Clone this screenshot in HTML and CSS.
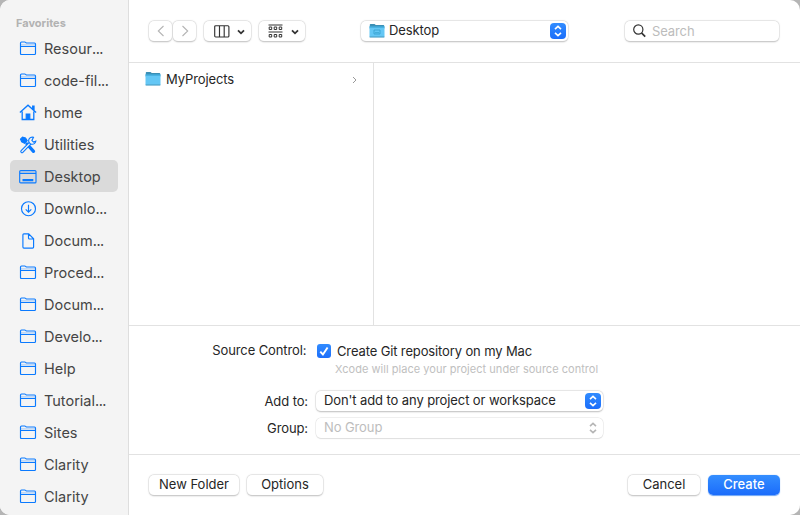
FILE: index.html
```html
<!DOCTYPE html>
<html lang="en">
<head>
<meta charset="utf-8">
<title>Create Project</title>
<link rel="stylesheet" href="styles.css">
</head>
<body>
<svg class="defs" width="0" height="0" aria-hidden="true">
  <defs>
    <symbol id="folder" viewBox="0 0 18 18"><path d="M1.500 13.500V3q0-1 1-1h3.200q.5 0 .9.400l.7.600h8.200q1 0 1 1v9.500q0 1-1 1h-13q-1 0-1-1zM1.500 6.500h15"/><path d="M2 4.900h14" opacity=".3"/></symbol>
    <symbol id="home" viewBox="0 0 18 18"><path d="M.9 8.600 9 1.200l8.100 7.400M3.200 7.500v8h11.600v-8M13.700 5.300V2.200h1.300v4.300" stroke-width="1.300"/><path d="M7.200 15.500V10h3.600v5.500z" fill="#0a7aff"/></symbol>
    <symbol id="tools" viewBox="0 0 18 18"><path d="M1.500 3.200 3.500 1.200l3 .7 1.700 2.800-2.500 2.500-3-1.500z" fill="#0a7aff"/><path d="m8 8 6.500 7.300" stroke-width="3.300" stroke-linecap="round"/><path d="m3 15.500 8.200-8.400" stroke-width="3.500" stroke-linecap="round"/><path d="m3 15.500 8.200-8.400" stroke="#f4f4f4" stroke-width="1.300" stroke-linecap="round"/><path d="M14.500 1.300a3.600 3.600 0 1 0 2.300 3.900l-2.300.9-1.600-1.600z" fill="#f4f4f4"/></symbol>
    <symbol id="desktop" viewBox="0 0 18 18"><rect x=".7" y="2.600" width="16.300" height="12.300" rx="1"/><path d="M1 5.300h16"/><path d="M3.500 12.200h10.800" stroke-width="2.200"/></symbol>
    <symbol id="download" viewBox="0 0 18 18"><circle cx="9.500" cy="8.700" r="7"/><path d="M9.500 4.700v7.200M6.700 9.300l2.800 2.800 2.800-2.800"/></symbol>
    <symbol id="document" viewBox="0 0 18 18"><path d="M3.900 15.100V2.800q0-1 1-1h4.800l4.900 5v8.300q0 1-1 1H4.900q-1 0-1-1zM9.500 2v4q0 1 1 1h4"/></symbol>
    <symbol id="blue-folder" viewBox="0 0 16 16"><path d="M.8 1.700q0-.7.700-.7h4l1.300 1.100h7.700q.7 0 .7.700V6H.8z" fill="#3b8fb5"/><path d="M.5 3.500h15v10q0 .7-.7.700H1.200q-.7 0-.7-.7z" fill="#64c7f5"/><path d="M.5 3.500h15v1H.5z" fill="#2f9dcf"/><path d="M.6 14h14.800" stroke="#4594b8" stroke-width=".9"/></symbol>
    <symbol id="chevrons" viewBox="0 0 16 16"><path d="M5 6.200 8 3.400l3 2.800M5 9.800l3 2.800 3-2.800"/></symbol>
    <symbol id="down" viewBox="0 0 8 6"><path d="m1 1.300 3 3 3-3"/></symbol>
  </defs>
</svg>
<div class="dialog">
  <nav class="sidebar">
    <h2>Favorites</h2>
    <ul>
      <li><svg><use href="#folder"/></svg><span>Resour<i>...</i></span></li>
      <li><svg><use href="#folder"/></svg><span>code-fil<i>...</i></span></li>
      <li><svg><use href="#home"/></svg><span>home</span></li>
      <li><svg><use href="#tools"/></svg><span>Utilities</span></li>
      <li class="selected"><svg><use href="#desktop"/></svg><span>Desktop</span></li>
      <li><svg><use href="#download"/></svg><span>Downlo<i>...</i></span></li>
      <li><svg><use href="#document"/></svg><span>Docum<i>...</i></span></li>
      <li><svg><use href="#folder"/></svg><span>Proced<i>...</i></span></li>
      <li><svg><use href="#folder"/></svg><span>Docum<i>...</i></span></li>
      <li><svg><use href="#folder"/></svg><span>Develo<i>...</i></span></li>
      <li><svg><use href="#folder"/></svg><span>Help</span></li>
      <li><svg><use href="#folder"/></svg><span>Tutorial<i>...</i></span></li>
      <li><svg><use href="#folder"/></svg><span>Sites</span></li>
      <li><svg><use href="#folder"/></svg><span>Clarity</span></li>
      <li><svg><use href="#folder"/></svg><span>Clarity</span></li>
    </ul>
  </nav>
  <main>
    <header class="toolbar">
      <div class="control nav"><svg width="8" height="12" viewBox="0 0 8 12"><path d="M6.500 1 1.300 6l5.200 5"/></svg></div>
      <div class="control nav"><svg width="8" height="12" viewBox="0 0 8 12"><path d="m1.500 1 5.200 5-5.200 5"/></svg></div>
      <div class="control view columns"><svg width="16" height="13" viewBox="0 0 16 13"><rect x=".7" y=".7" width="14.200" height="11.300" rx="1"/><path d="M5.500 1v11M10.200 1v11"/></svg><svg class="down"><use href="#down"/></svg></div>
      <div class="control view groups"><svg width="15" height="15" viewBox="0 0 15 15"><path d="M.5 1h14M.5 8h14M1.200 3h2.500v2.500H1.200zM6.200 3h2.500v2.500H6.200zM11.200 3h2.500v2.500h-2.500zM1.200 10.500h2.500V13H1.200zM6.200 10.500h2.500V13H6.200zM11.200 10.500h2.500V13h-2.500z"/></svg><svg class="down"><use href="#down"/></svg></div>
      <div class="control popup location"><svg class="folder" viewBox="0 0 16 16"><use href="#blue-folder"/><path d="M5 7h6v4H5zM6 9.700h4" fill="none" stroke="#349fcc" stroke-width=".8"/></svg><span>Desktop</span><svg class="stepper"><use href="#chevrons"/></svg></div>
      <div class="control search"><svg width="14" height="14" viewBox="0 0 14 14"><circle cx="5.300" cy="5.500" r="4.600"/><path d="m8.500 8.800 3.700 3.800" stroke-width="1.700"/></svg><span>Search</span></div>
    </header>
    <section class="browser">
      <div class="column"><svg class="folder"><use href="#blue-folder"/></svg><span>MyProjects</span><svg class="more" width="5" height="8" viewBox="0 0 5 8"><path d="m1 1 3 3-3 3"/></svg></div>
    </section>
    <section class="options">
      <div class="row source"><span class="label">Source Control:</span><svg class="check" viewBox="0 0 14 14"><path d="m3.300 7.700 2.600 2.800 4.700-7"/></svg><span class="git">Create Git repository on my Mac</span></div>
      <p>Xcode will place your project under source control</p>
      <div class="row add"><span class="label">Add to:</span><div class="control popup"><span>Don't add to any project or workspace</span><svg class="stepper"><use href="#chevrons"/></svg></div></div>
      <div class="row group"><span class="label">Group:</span><div class="control popup disabled"><span>No Group</span><svg class="stepper"><use href="#chevrons"/></svg></div></div>
    </section>
    <footer>
      <div class="control new-folder">New Folder</div>
      <div class="control opts">Options</div>
      <div class="control cancel">Cancel</div>
      <div class="control create">Create</div>
    </footer>
  </main>
</div>
</body>
</html>
```
FILE: styles.css
```css
* { box-sizing: border-box; }
body { margin: 0; background: #b5b5b5; font: 13px/16px Inter, "Liberation Sans", sans-serif; letter-spacing: -.1px; color: #262626; }
svg { fill: none; flex: none; }
.defs { position: absolute; }
.dialog { display: grid; grid-template-columns: 129px 1fr; width: 800px; height: 515px; overflow: hidden; border-radius: 10px; background: #fff; }
.sidebar { background: #f4f4f4; border-right: 1px solid #dedede; padding: 16px 10px 0; }
h2 { margin: 0 0 2px 6px; font-size: 11px; line-height: 14px; font-weight: 700; letter-spacing: 0; color: #b2b2b2; }
ul { margin: 0; padding: 0; list-style: none; }
li { display: flex; align-items: center; height: 32px; width: 108px; padding: 2px 0 0 9px; gap: 7px; border-radius: 5px; font-size: 14.5px; letter-spacing: 0; color: #454545; white-space: nowrap; }
li i { font-style: normal; letter-spacing: -.5px; }
li svg { width: 18px; height: 18px; stroke: #0a7aff; stroke-width: 1.15; }
li.selected { background: #dadada; }
main { display: grid; grid-template-rows: 63px 263px 129px 1fr; min-width: 0; }
.toolbar { display: flex; align-items: flex-start; padding: 21px 21px 0 20px; border-bottom: 1px solid #e2e2e2; }
.control { display: flex; align-items: center; height: 20px; border-radius: 5px; background: #fff; box-shadow: 0 0 0 .5px #dedede, 0 .5px 1.5px #aaa; white-space: nowrap; }
.nav { width: 23px; margin-right: 1px; justify-content: center; }
.nav svg { stroke: #b4b4b4; stroke-width: 1.1; }
.view { margin-left: 7px; width: 47px; padding: 0 6px 0 10px; justify-content: space-between; stroke: #333; }
.view.columns svg { stroke-width: 1.15; }
.groups { margin-left: 8px; width: 46px; padding-left: 9px; }
.view .down, .view.columns .down { width: 8px; height: 6px; stroke-width: 1.8; margin-top: 1px; }
.popup { justify-content: space-between; padding: 0 2px 0 8px; }
.popup span { padding-bottom: 2px; }
.location { width: 207px; margin-left: 56px; }
.location span { flex: 1; margin-left: 4px; }
.folder { width: 16px; height: 16px; }
.stepper { width: 16px; height: 16px; border-radius: 4px; background: linear-gradient(#318cff, #1c6efa); stroke: #fff; stroke-width: 1.6; }
.search { width: 154px; margin-left: auto; padding-left: 8px; gap: 5px; color: #bcbcbc; }
.search svg { stroke: #333; stroke-width: 1.2; }
.browser { border-bottom: 1px solid #e2e2e2; }
.column { display: flex; align-items: flex-start; width: 245px; height: 262px; padding: 8px 16px 0 16px; border-right: 1px solid #e2e2e2; }
.column span { flex: 1; margin-left: 5px; }
.more { margin-top: 5px; stroke: #999; }
.options { border-bottom: 1px solid #e2e2e2; padding-top: 17px; }
.row { display: flex; align-items: center; height: 16px; }
.label { width: 178px; text-align: right; }
.source .label { width: 177.500px; padding-bottom: 2px; }
.check { width: 14px; height: 14px; margin: 0 6px 0 10.500px; border-radius: 3px; background: linear-gradient(#318cff, #1c6efa); stroke: #fff; stroke-width: 1.9; }
.git { letter-spacing: -.13px; }
.options p { margin: 3px 0 0 206px; font-size: 11px; line-height: 14px; letter-spacing: .03px; color: #c0c0c0; }
.add { margin-top: 15px; height: 20px; }
.group { margin-top: 7px; height: 20px; }
.add .label, .group .label { width: 179px; }
.group .label { padding-bottom: 1px; }
.row .control { width: 287px; margin-left: 8px; }
.disabled { color: #bdbdbd; box-shadow: 0 0 0 .5px #e2e2e2, 0 .5px 1px #ddd; }
.disabled .stepper { background: none; stroke: #b5b5b5; }
footer { display: flex; align-items: flex-start; padding: 20px 20px 0; letter-spacing: 0; }
footer .control { justify-content: center; width: 76px; padding-bottom: 2px; }
footer .new-folder { width: 90px; margin-right: 8px; }
footer .cancel { width: 72px; margin-left: auto; margin-right: 8px; }
footer .create { width: 72px; color: #fff; font-weight: 500; background: linear-gradient(#348eff, #1b6cfb); box-shadow: 0 .5px 1px #69a2f5; }
```
